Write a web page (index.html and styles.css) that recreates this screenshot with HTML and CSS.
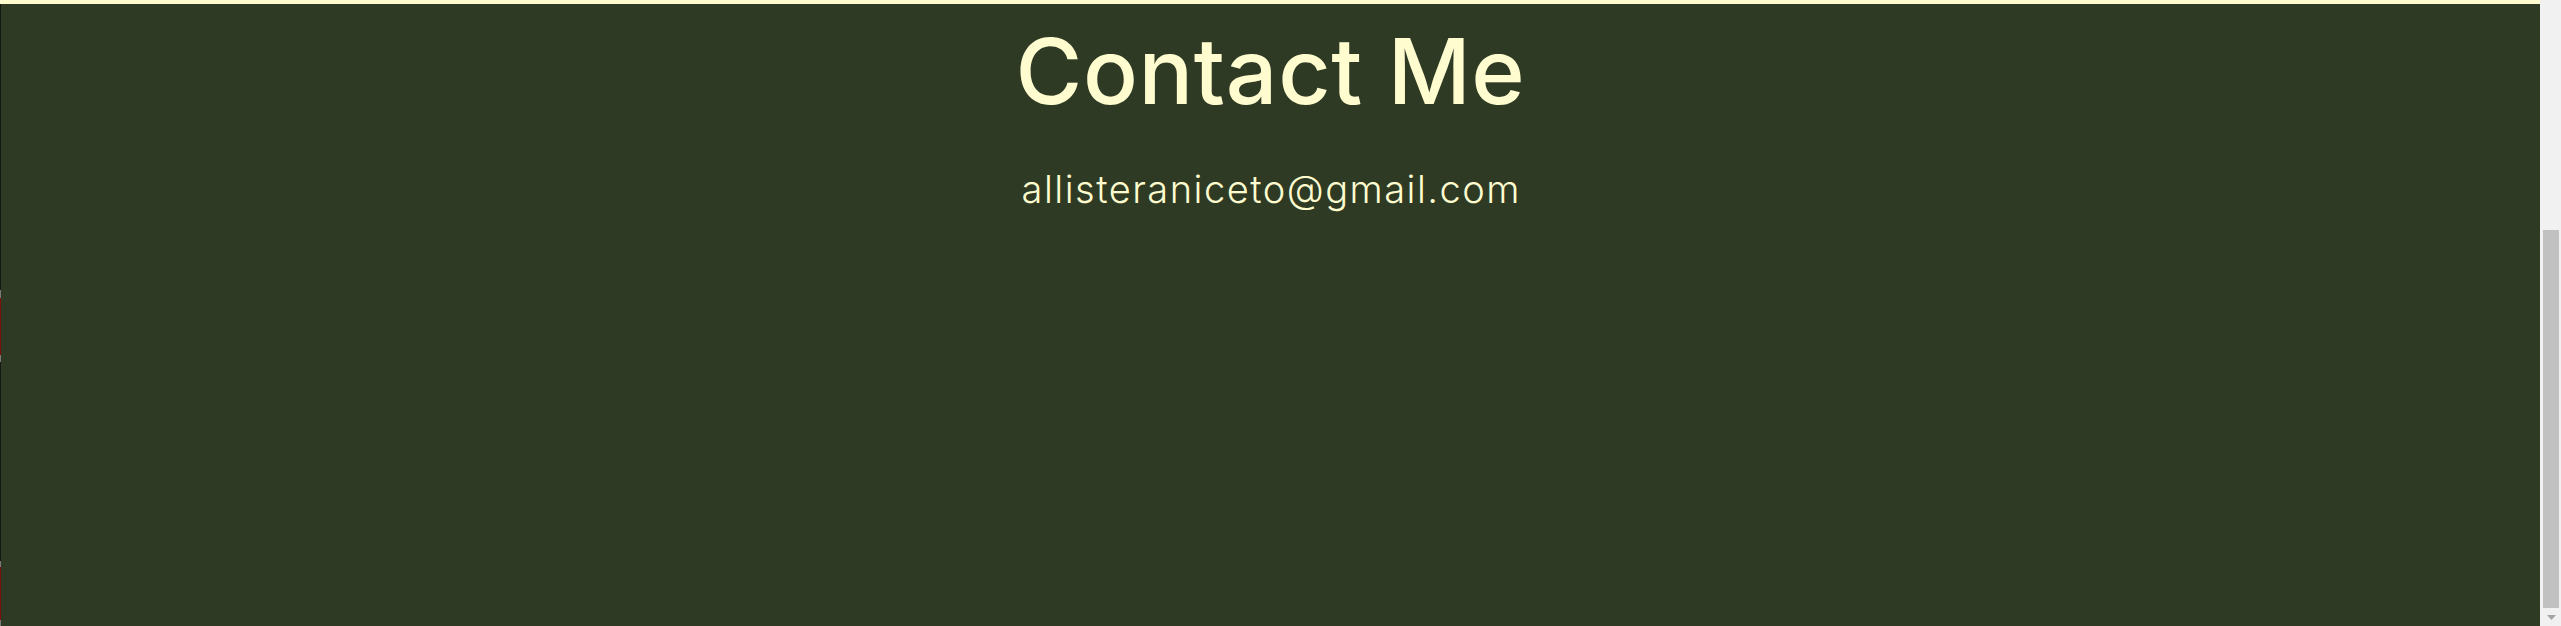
FILE: index.html
```html
<!DOCTYPE html>
<html lang="en">
<head>
<meta charset="utf-8">
<title>Contact Me</title>
<link rel="stylesheet" href="styles.css">
</head>
<body>
<div class="window">
  <div class="edge"></div>
  <main class="contact">
    <h1 class="contact-title">Contact Me</h1>
    <p class="contact-email">allisteraniceto@gmail.com</p>
  </main>
  <div class="scrollbar">
    <div class="scrollbar-track"></div>
    <div class="scrollbar-thumb"></div>
    <div class="scrollbar-button">
      <svg width="9" height="5" viewBox="0 0 9 5"><path d="M0 0H9L4.5 5Z" fill="#a3a3a3"/></svg>
    </div>
  </div>
</div>
</body>
</html>
```
FILE: styles.css
```css
html, body {
  margin: 0;
  padding: 0;
  height: 100%;
  overflow: hidden;
  background: #2f3a24;
}

.window {
  display: flex;
  height: 626px;
}

.edge {
  width: 1px;
  flex: none;
  background: linear-gradient(to bottom,
    #fffdd0 0 4px,
    #151812 4px 290px,
    #7a7a7a 290px 298px,
    #7d0f0f 298px 355px,
    #7a7a7a 355px 362px,
    #151812 362px 561px,
    #7a7a7a 561px 567px,
    #7d0f0f 567px 620px,
    #7a7a7a 620px 626px);
}

.contact {
  flex: 1;
  border-top: 4px solid #fffdd0;
  background: #2f3a24;
  color: #fffdd0;
  display: flex;
  flex-direction: column;
  align-items: center;
  font-family: "Inter", "Liberation Sans", sans-serif;
}

.contact-title {
  margin: 22px 0 0;
  font-size: 91px;
  font-weight: 500;
  line-height: 90px;
  letter-spacing: 0.6px;
}

.contact-email {
  margin: 54px -1.5px 0 0;
  font-size: 38px;
  font-weight: 300;
  line-height: 38px;
  letter-spacing: 1.5px;
}

.scrollbar {
  width: 21px;
  flex: none;
  background: #f1f1f1;
  display: flex;
  flex-direction: column;
  padding: 0 2px 0 3px;
  box-sizing: border-box;
}

.scrollbar-track {
  flex: 1;
}

.scrollbar-thumb {
  height: 378px;
  background: #c1c1c1;
}

.scrollbar-button {
  height: 18px;
  display: flex;
  align-items: center;
  justify-content: center;
}
```
